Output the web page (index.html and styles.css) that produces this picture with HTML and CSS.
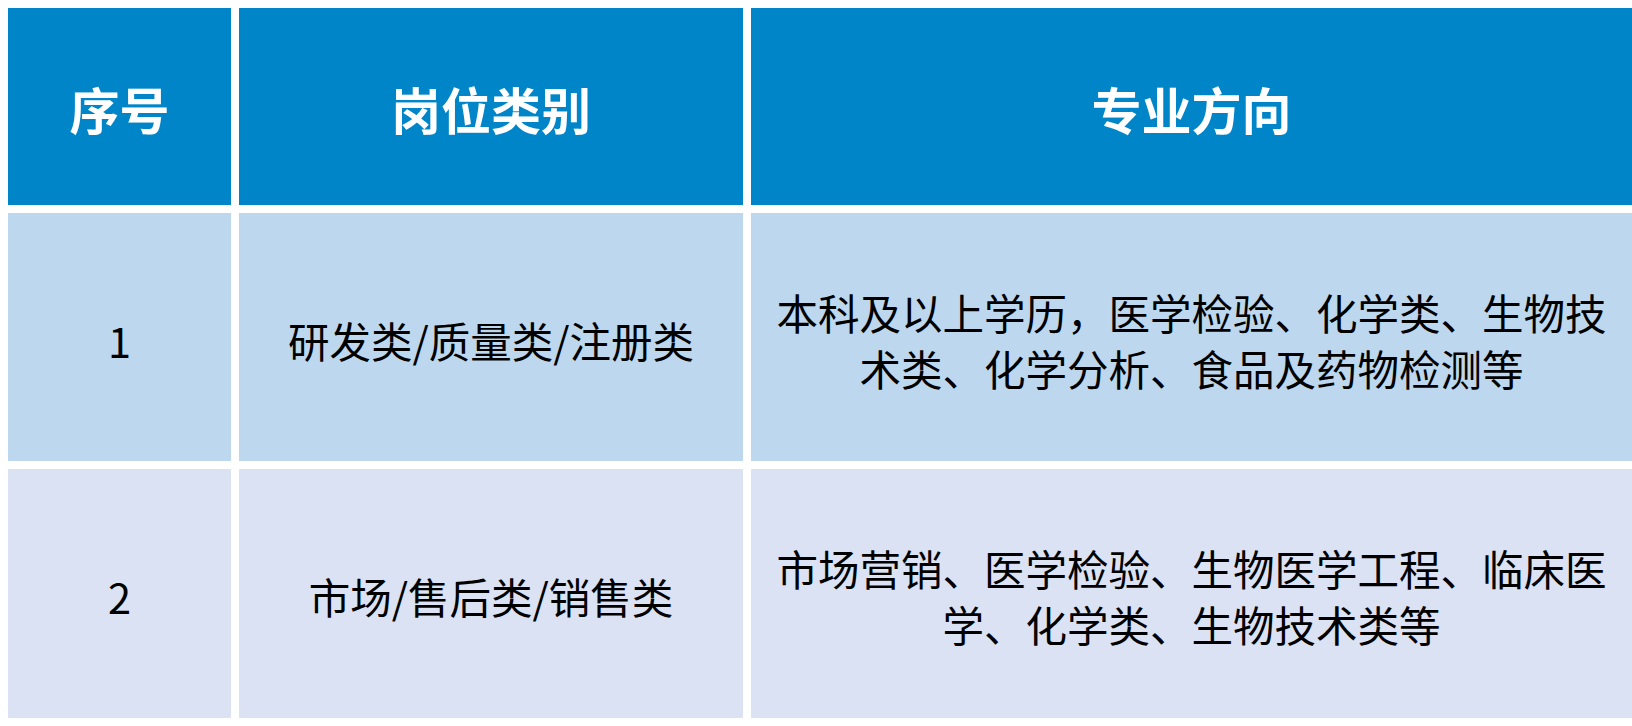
FILE: index.html
```html
<!DOCTYPE html>
<html lang="zh-CN">
<head>
<meta charset="utf-8">
<title>岗位类别</title>
<link rel="stylesheet" href="styles.css">
</head>
<body>
<div class="table">
  <div class="cell head">序号</div>
  <div class="cell head">岗位类别</div>
  <div class="cell head">专业方向</div>

  <div class="cell row1">1</div>
  <div class="cell row1">研发类/质量类/注册类</div>
  <div class="cell row1 wide">本科及以上学历，医学检验、化学类、生物技术类、化学分析、食品及药物检测等</div>

  <div class="cell row2">2</div>
  <div class="cell row2">市场/售后类/销售类</div>
  <div class="cell row2 wide">市场营销、医学检验、生物医学工程、临床医学、化学类、生物技术类等</div>
</div>
</body>
</html>
```

FILE: styles.css
```css
html, body {
  margin: 0;
  padding: 0;
  background: #ffffff;
}
body {
  width: 1632px;
  height: 726px;
  overflow: hidden;
  font-family: "Noto Sans CJK SC", "Noto Sans", sans-serif;
}
.table {
  display: grid;
  grid-template-columns: 223px 504px 1fr;
  grid-template-rows: 197px 248px 249px;
  gap: 8px;
  padding: 8px 0 8px 8px;
}
.cell {
  display: flex;
  align-items: center;
  justify-content: center;
  text-align: center;
  color: #000000;
  font-size: 41.5px;
  line-height: 56px;
  padding: 5px 16px 0;
  box-sizing: border-box;
}
.head {
  background: #0086c8;
  color: #ffffff;
  font-weight: 700;
  font-size: 50px;
  padding-top: 2px;
}
.row1 {
  background: #bdd7ee;
}
.row2 {
  background: #dae2f3;
}
```
